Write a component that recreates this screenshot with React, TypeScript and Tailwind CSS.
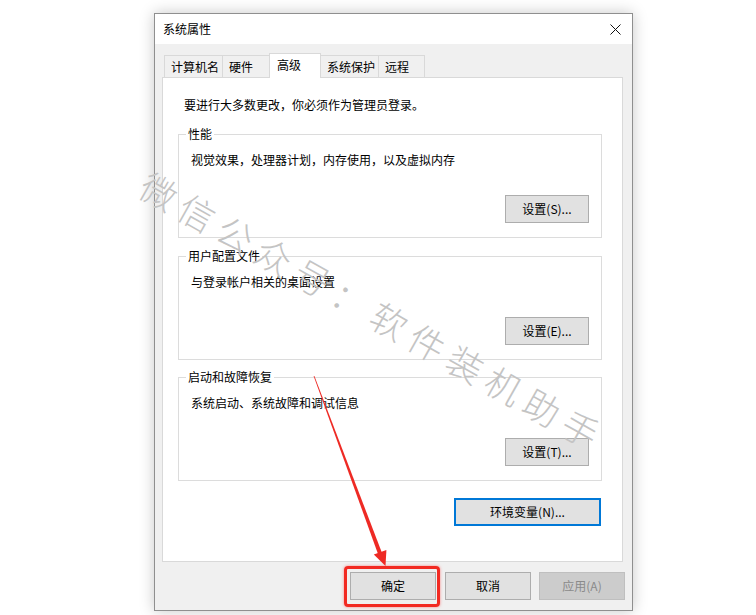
import * as React from "react";

const font = { fontFamily: '"Noto Sans CJK SC", "Noto Sans", sans-serif' };

interface Tab {
  label: string;
  width: string;
  active?: boolean;
}

const tabs: Tab[] = [
  { label: "计算机名", width: "w-[59px]" },
  { label: "硬件", width: "w-[48px]" },
  { label: "高级", width: "w-[52px]", active: true },
  { label: "系统保护", width: "w-[59px]" },
  { label: "远程", width: "w-[47px]" },
];

const WinButton: React.FC<{ label: string; className?: string }> = ({ label, className = "" }) => (
  <div
    className={`h-[28px] flex items-center justify-center bg-[#e1e1e1] border border-[#adadad] text-[12px] leading-[18px] text-black ${className}`}
  >
    {label}
  </div>
);

const GroupBox: React.FC<{ title: string; desc: string; button: string; className?: string }> = ({
  title,
  desc,
  button,
  className = "",
}) => (
  <div className={`relative w-[424px] h-[104px] border border-[#dcdcdc] flex flex-col ${className}`}>
    <span className="absolute -top-[10px] left-[7px] px-[2px] bg-white leading-[18px]">{title}</span>
    <div className="pt-[16px] pl-[12px] leading-[18px]">{desc}</div>
    <WinButton label={button} className="w-[84px] mt-auto mb-[14px] mr-[12px] self-end" />
  </div>
);

// watermark characters are rotated along one line
const watermark = "微信公众号：软件装机助手";

export default function App() {
  return (
    <div className="relative w-[756px] h-[615px] bg-white overflow-hidden text-[12px] text-black" style={font}>
      <div className="pt-[13px] pl-[154px]">
        <div className="w-[479px] h-[598px] border border-[#8f8f8f] bg-[#f0f0f0] flex flex-col shadow-[0_0_14px_rgba(0,0,0,0.22)]">
          {/* title bar */}
          <div className="h-[30px] bg-white flex items-center justify-between pl-[8px] pr-[10px]">
            <span className="leading-[18px]">系统属性</span>
            <svg width="11" height="11" viewBox="0 0 11 11" className="mr-[1px]">
              <path d="M0.5 0.5 L10.5 10.5 M10.5 0.5 L0.5 10.5" stroke="#111" strokeWidth="1" />
            </svg>
          </div>

          {/* body */}
          <div className="flex-1 flex flex-col pt-[9px] pl-[7px] pr-[9px]">
            <div className="flex items-end h-[24px] pl-[2px]">
              {tabs.map((tab, i) =>
                tab.active ? (
                  <div
                    key={tab.label}
                    className={`${tab.width} h-[25px] -mb-px -ml-px relative z-10 bg-white border border-b-0 border-[#d9d9d9] pl-[7px] pt-[2px] leading-[18px]`}
                  >
                    {tab.label}
                  </div>
                ) : (
                  <div
                    key={tab.label}
                    className={`${tab.width} h-[22px] ${i > 0 ? "-ml-px" : ""} border border-b-0 border-[#d9d9d9] bg-[#f0f0f0] flex items-center pl-[6px] leading-[18px]`}
                  >
                    {tab.label}
                  </div>
                )
              )}
            </div>

            <div className="h-[485px] bg-white border border-[#d9d9d9] flex flex-col pl-[15px]">
              <div className="mt-[18px] ml-[6px] leading-[18px]">要进行大多数更改，你必须作为管理员登录。</div>
              <GroupBox className="mt-[20px]" title="性能" desc="视觉效果，处理器计划，内存使用，以及虚拟内存" button="设置(S)..." />
              <GroupBox className="mt-[18px]" title="用户配置文件" desc="与登录帐户相关的桌面设置" button="设置(E)..." />
              <GroupBox className="mt-[17px]" title="启动和故障恢复" desc="系统启动、系统故障和调试信息" button="设置(T)..." />
              <div className="w-[424px] flex justify-end mt-[17px]">
                <div className="w-[147px] h-[28px] mr-[1px] flex items-center justify-center bg-[#e1e1e1] border-2 border-[#0078d7] leading-[18px]">
                  环境变量(N)...
                </div>
              </div>
            </div>

            <div className="flex justify-end mt-[10px] -mr-[2px]">
              <div className="relative">
                <WinButton label="确定" className="w-[86px]" />
                <div className="absolute -left-[6px] -right-[4px] -top-[6px] -bottom-[7px] border-[3px] border-[#f22a22] rounded-[4px] shadow-[0_0_3px_rgba(255,40,40,0.55)]" />
              </div>
              <WinButton label="取消" className="w-[86px] ml-[9px]" />
              <div className="w-[86px] ml-[8px] h-[28px] flex items-center justify-center bg-[#cccccc] border border-[#bfbfbf] text-[#8a8a8a] leading-[18px]">
                应用(A)
              </div>
            </div>
          </div>
        </div>
      </div>

      {/* watermark */}
      <div
        className="absolute left-[144px] top-[163px] whitespace-nowrap text-[36px] leading-[36px] tracking-[8px] text-[#c4c4c4] pointer-events-none"
        style={{ transform: "rotate(29.4deg)", transformOrigin: "0 50%", fontWeight: 300 }}
      >
        {watermark}
      </div>

      {/* red arrow */}
      <svg className="absolute inset-0 pointer-events-none" width="756" height="615">
        <polygon points="313.6,376 314.4,376 382,553 378.2,554.4" fill="#ee2a24" />
        <polygon points="385.5,566 373.8,554.6 386.4,550" fill="#ee2a24" />
      </svg>
    </div>
  );
}
